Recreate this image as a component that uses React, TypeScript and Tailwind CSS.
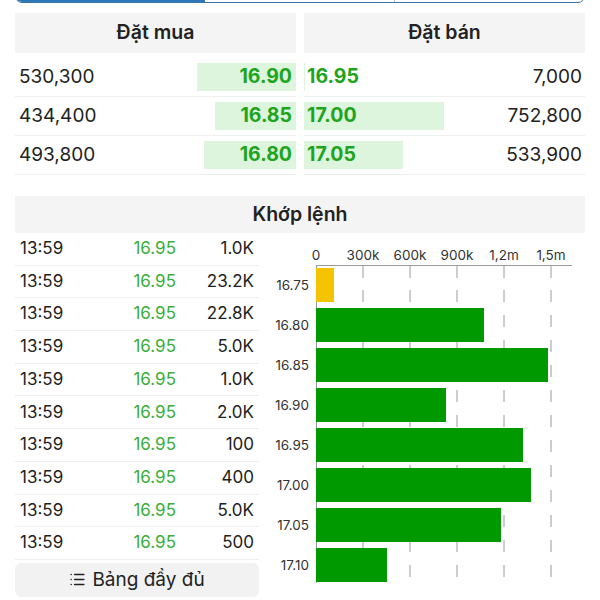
import { List } from "lucide-react";

const bids = [
  { qty: "530,300", vol: 530300, price: "16.90" },
  { qty: "434,400", vol: 434400, price: "16.85" },
  { qty: "493,800", vol: 493800, price: "16.80" },
];
const asks = [
  { qty: "7,000", vol: 7000, price: "16.95" },
  { qty: "752,800", vol: 752800, price: "17.00" },
  { qty: "533,900", vol: 533900, price: "17.05" },
];
const trades = ["1.0K", "23.2K", "22.8K", "5.0K", "1.0K", "2.0K", "100", "400", "5.0K", "500"];
const ticks = ["0", "300k", "600k", "900k", "1,2m", "1,5m"];
const bars = [
  { label: "16.75", w: 18, color: "#f5c400" },
  { label: "16.80", w: 168, color: "#009a00" },
  { label: "16.85", w: 232, color: "#009a00" },
  { label: "16.90", w: 130, color: "#009a00" },
  { label: "16.95", w: 207, color: "#009a00" },
  { label: "17.00", w: 215, color: "#009a00" },
  { label: "17.05", w: 185, color: "#009a00" },
  { label: "17.10", w: 71, color: "#009a00" },
];

const barScale = 0.000186;

function VolumeChart() {
  return (
    <svg width="318" height="348" viewBox="0 0 318 348" className="block">
      {ticks.map((t, i) => {
        const x = 49 + i * 47;
        return (
          <g key={t}>
            <text x={x} y={22} textAnchor="middle" fontSize="13.5" fill="#333">
              {t}
            </text>
            {i > 0 && (
              <>
                <line x1={x} y1={27} x2={x} y2={40} stroke="#9a9a9a" strokeWidth="1" />
                <line x1={x} y1={52} x2={x} y2={345} stroke="#9a9a9a" strokeWidth="1" strokeDasharray="12 13" />
              </>
            )}
          </g>
        );
      })}
      <line x1={49} y1={27.5} x2={305} y2={27.5} stroke="#9a9a9a" strokeWidth="1" />
      <line x1={49.5} y1={27} x2={49.5} y2={345} stroke="#9a9a9a" strokeWidth="1" />
      {bars.map((b, i) => (
        <g key={b.label}>
          <rect x={49} y={30 + i * 40} width={b.w} height={34} fill={b.color} />
          <text x={42} y={52 + i * 40} textAnchor="end" fontSize="13.5" fill="#333">
            {b.label}
          </text>
        </g>
      ))}
    </svg>
  );
}

export default function App() {
  return (
    <div
      className="w-[600px] h-[600px] overflow-hidden bg-white text-[#222]"
      style={{ fontFamily: "Inter, 'Noto Sans', sans-serif" }}
    >
      {/* segmented control, only its bottom edge is on screen */}
      <div className="mx-[15px] mt-[-27px] h-[30px] flex rounded-[7px] border border-[#3b74a8] overflow-hidden">
        <div className="w-[189px] bg-[#2f78b7]" />
        <div className="flex-1 border-r border-[#b9c7d3]" />
        <div className="flex-1" />
      </div>

      {/* order book */}
      <div className="mx-[15px] mt-[10px] grid grid-cols-2 gap-[8px]">
        <div>
          <div className="h-[40px] bg-[#f4f4f4] flex items-center justify-center text-[19.5px] font-semibold">
            Đặt mua
          </div>
          <div className="mt-[5px]">
            {bids.map((r) => (
              <div key={r.price} className="h-[39px] border-b border-[#eeeeee] flex items-center justify-between py-[5px]">
                <span className="pl-[4px] text-[19px]">{r.qty}</span>
                <div
                  className="h-full bg-[#ddf4dd] flex items-center justify-end pr-[4px]"
                  style={{ width: r.vol * barScale }}
                >
                  <span className="text-[19.5px] font-bold text-[#1ea51e]">{r.price}</span>
                </div>
              </div>
            ))}
          </div>
        </div>
        <div>
          <div className="h-[40px] bg-[#f4f4f4] flex items-center justify-center text-[19.5px] font-semibold">
            Đặt bán
          </div>
          <div className="mt-[5px]">
            {asks.map((r) => (
              <div key={r.price} className="relative h-[39px] border-b border-[#eeeeee] flex items-center justify-between py-[5px]">
                <div className="absolute left-0 top-[5px] bottom-[5px] bg-[#ddf4dd]" style={{ width: r.vol * barScale }} />
                <span className="relative pl-[3px] text-[19.5px] font-bold text-[#1ea51e]">{r.price}</span>
                <span className="relative pr-[3px] text-[19px]">{r.qty}</span>
              </div>
            ))}
          </div>
        </div>
      </div>

      {/* matched orders */}
      <div className="mx-[15px] mt-[21px] h-[37px] bg-[#f4f4f4] flex items-center justify-center text-[19.5px] font-semibold">
        Khớp lệnh
      </div>
      <div className="mx-[15px] flex">
        <div className="w-[245px] flex flex-col">
          {trades.map((v, i) => (
            <div key={i} className="h-[32.7px] border-b border-[#eeeeee] flex items-center text-[17px]">
              <span className="w-[100px] pl-[5px]">13:59</span>
              <span className="w-[61px] text-right text-[#3aae3a]">16.95</span>
              <span className="flex-1 text-right pr-[5px]">{v}</span>
            </div>
          ))}
          <button className="mt-[3px] h-[34px] rounded-[6px] bg-[#f2f2f2] flex items-center justify-center gap-[6px] text-[19px] text-[#222]">
            <List size={17} strokeWidth={2.2} />
            Bảng đầy đủ
          </button>
        </div>
        <div className="ml-[8px] mt-[5px]">
          <VolumeChart />
        </div>
      </div>
    </div>
  );
}
